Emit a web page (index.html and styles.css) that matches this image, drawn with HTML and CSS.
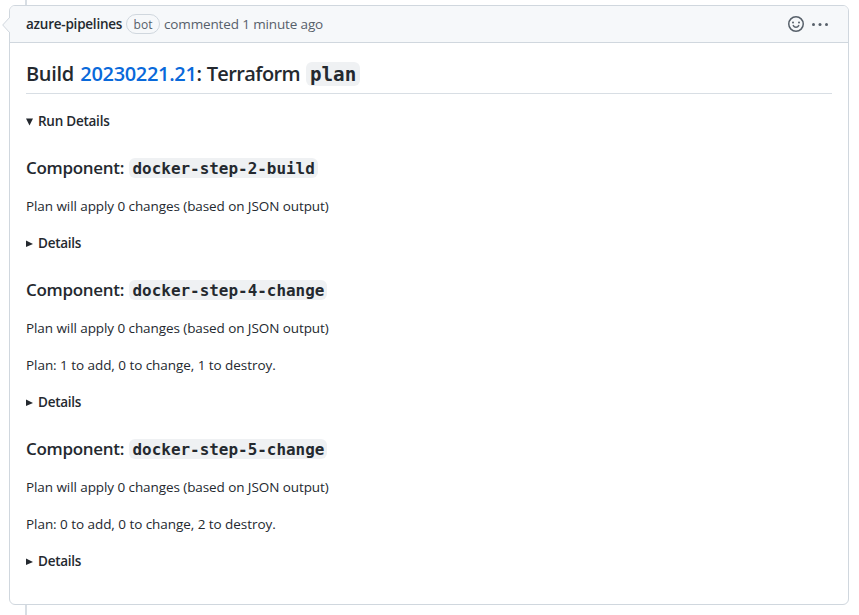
FILE: index.html
```html
<!DOCTYPE html>
<html lang="en">
<head>
<meta charset="utf-8">
<title>Pull request comment</title>
<link rel="stylesheet" href="styles.css">
</head>
<body>
<main class="timeline">
  <article class="comment">
    <svg class="caret" width="8" height="16" viewBox="0 0 8 16"><path d="M8 0 .7 8 8 16" fill="#f6f8fa" stroke="#d0d7de"/></svg>
    <header class="comment-header">
      <strong class="author">azure-pipelines</strong>
      <span class="label">bot</span>
      <span class="meta">commented 1 minute ago</span>
      <div class="actions">
        <svg width="16" height="16" viewBox="0 0 16 16" fill="none" stroke="#57606a" stroke-width="1.5"><circle cx="8" cy="8" r="7.25"/><path d="M5.3 9.6C6.5 11.7 9.5 11.7 10.7 9.6" stroke-linecap="round"/><g fill="#57606a" stroke="none"><circle cx="5" cy="6.5" r="1"/><circle cx="11" cy="6.5" r="1"/></g></svg>
        <svg width="16" height="16" viewBox="0 0 16 16" fill="#57606a"><circle cx="1.5" cy="8.5" r="1.5"/><circle cx="8" cy="8.5" r="1.5"/><circle cx="14.5" cy="8.5" r="1.5"/></svg>
      </div>
    </header>
    <div class="comment-body">
      <h2><span class="title">Build <a>20230221.21</a>: <span class="tool">Terraform</span></span><code>plan</code></h2>
      <div class="summary"><svg class="marker" width="8" height="8" viewBox="0 0 8 8"><path d="M0 .5h7L3.5 7.5z"/></svg><span>Run Details</span></div>

      <h3><span class="component">Component:</span><code>docker-step-2-build</code></h3>
      <p>Plan will apply 0 changes (based on JSON output)</p>
      <div class="summary"><svg class="marker" width="8" height="8" viewBox="0 0 8 8"><path d="M0 .6v6.5l7-3.2z"/></svg><span>Details</span></div>

      <h3><span class="component">Component:</span><code>docker-step-4-change</code></h3>
      <p>Plan will apply 0 changes (based on JSON output)</p>
      <p class="totals">Plan: 1 to add, 0 to change, 1 to destroy.</p>
      <div class="summary"><svg class="marker" width="8" height="8" viewBox="0 0 8 8"><path d="M0 .6v6.5l7-3.2z"/></svg><span>Details</span></div>

      <h3><span class="component">Component:</span><code>docker-step-5-change</code></h3>
      <p>Plan will apply 0 changes (based on JSON output)</p>
      <p class="totals">Plan: 0 to add, 0 to change, 2 to destroy.</p>
      <div class="summary"><svg class="marker" width="8" height="8" viewBox="0 0 8 8"><path d="M0 .6v6.5l7-3.2z"/></svg><span>Details</span></div>
    </div>
  </article>
</main>
</body>
</html>
```
FILE: styles.css
```css
* { box-sizing: border-box; }
body {
  margin: 0;
  background: #fff;
  color: #24292f;
  font: 14px/21px "Open Sans", "Noto Sans", sans-serif;
  overflow: hidden;
}
svg { display: block; flex: none; }
.timeline {
  height: 615px;
  padding: 5px 10px 10px 9px;
  background: linear-gradient(#d8dee4, #d8dee4) 25px 0 / 2px 100% no-repeat;
}
.comment {
  position: relative;
  height: 600px;
  border: 1px solid #d0d7de;
  border-radius: 6px;
  background: #fff;
}
.caret { position: absolute; left: -8px; top: 11px; }
.comment-header {
  display: flex;
  align-items: center;
  height: 37px;
  padding: 0 20px 0 16px;
  border-bottom: 1px solid #d0d7de;
  border-radius: 5px 5px 0 0;
  background: #f6f8fa;
  white-space: nowrap;
}
.author { width: 96px; font-weight: 600; font-size: 13.5px; letter-spacing: -0.23px; }
.label {
  width: 34px;
  height: 20px;
  margin: 0 4px;
  border: 1px solid #d0d7de;
  border-radius: 10px;
  color: #57606a;
  font-size: 12px;
  line-height: 19px;
  text-align: center;
}
.meta { color: #57606a; font-size: 13.5px; letter-spacing: -0.14px; }
.actions { display: flex; gap: 8px; margin-left: auto; }
.comment-body { padding: 16px; white-space: nowrap; }
h2, h3 { display: flex; font-weight: 600; }
h2 {
  height: 35px;
  margin: 0 0 17px;
  border-bottom: 1px solid #d8dee4;
  font-size: 20px;
  line-height: 29px;
}
h2 a { margin-left: 1.5px; color: #0969da; }
.title { width: 280px; letter-spacing: -0.32px; }
.tool { letter-spacing: -0.6px; }
h3 { align-items: center; height: 24px; margin: 24px 0 16px; font-size: 17px; line-height: 24px; }
.component { width: 103px; letter-spacing: -0.3px; }
code {
  border-radius: 6px;
  background: #eff1f3;
  font-family: "DejaVu Sans Mono", monospace;
  font-weight: 700;
}
h2 code { height: 24px; margin-top: 3px; padding: 0 4px; font-size: 19.2px; line-height: 25px; }
h3 code { height: 20px; padding: 0 3px 0 3.5px; font-size: 15.95px; line-height: 22px; }
p { margin: 0 0 16px; font-size: 13.5px; letter-spacing: -0.08px; }
.totals { letter-spacing: -0.05px; }
.summary { display: flex; align-items: center; height: 21px; font-size: 13.5px; font-weight: 600; letter-spacing: -0.25px; }
.marker { margin-right: 4px; fill: #24292f; }
```
